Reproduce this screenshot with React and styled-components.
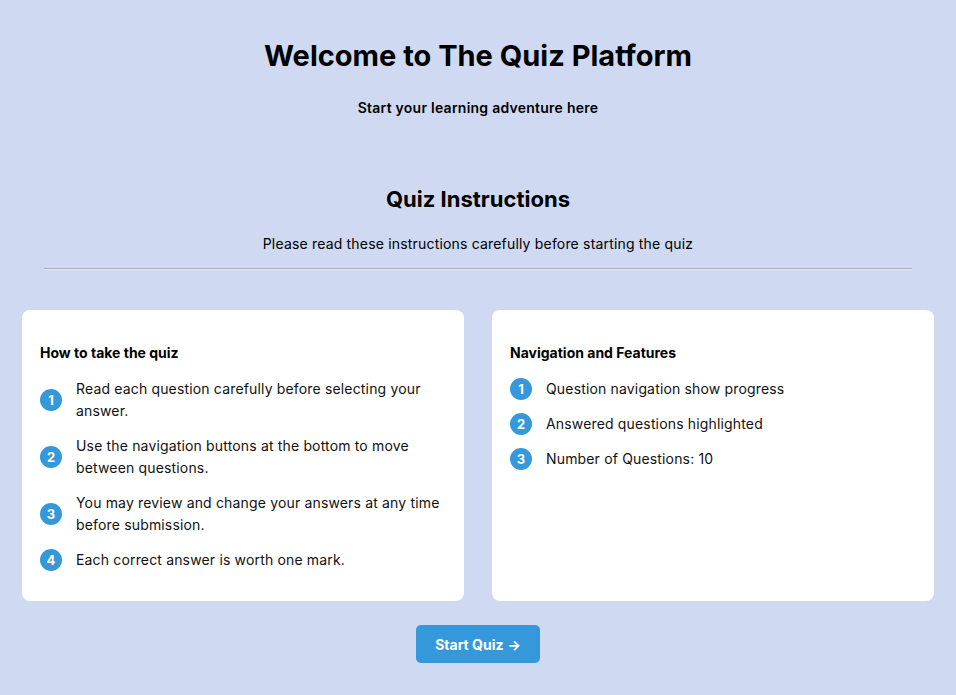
import React from "react";
import styled, { createGlobalStyle } from "styled-components";

const Global = createGlobalStyle`
  html, body { margin: 0; padding: 0; background: #cfd9f1; }
  body { font-family: Inter, "Noto Sans", sans-serif; color: #000; }
  * { box-sizing: border-box; }
`;

const Page = styled.div`
  min-height: 695px;
  background: #cfd9f1;
  padding: 38px 22px 32px;
  display: flex;
  flex-direction: column;
  align-items: stretch;
`;

const Title = styled.h1`
  margin: 0;
  font-size: 29px;
  line-height: 36px;
  font-weight: 700;
  text-align: center;
`;

const Subtitle = styled.p`
  margin: 24px 0 0;
  font-size: 14px;
  line-height: 20px;
  font-weight: 600;
  letter-spacing: 0.25px;
  text-align: center;
`;

const SectionTitle = styled.h2`
  margin: 67px 0 0;
  font-size: 22px;
  line-height: 28px;
  font-weight: 700;
  text-align: center;
`;

const Lead = styled.p`
  margin: 21px 0 0;
  font-size: 14px;
  line-height: 20px;
  letter-spacing: 0.18px;
  text-align: center;
`;

const Divider = styled.hr`
  margin: 14px 22px 0;
  border: 0;
  border-top: 1px solid #a9abb1;
  border-bottom: 1px solid #e6eaf4;
  height: 0;
`;

const Cards = styled.div`
  margin-top: 40px;
  display: grid;
  grid-template-columns: 1fr 1fr;
  gap: 28px;
`;

const Card = styled.section`
  background: #fff;
  border-radius: 8px;
  padding: 34px 18px 30px;
`;

const CardTitle = styled.h3`
  margin: 0;
  font-size: 14px;
  line-height: 17px;
  font-weight: 700;
`;

const List = styled.ol`
  list-style: none;
  margin: 17px 0 0;
  padding: 0;
  display: flex;
  flex-direction: column;
  gap: 13px;
`;

const Item = styled.li`
  display: flex;
  align-items: center;
  gap: 14px;
  font-size: 14px;
  line-height: 22px;
  letter-spacing: 0.16px;
  color: #111;
`;

const Badge = styled.span`
  flex: 0 0 22px;
  width: 22px;
  height: 22px;
  border-radius: 50%;
  background: #3498db;
  color: #fff;
  font-size: 13px;
  font-weight: 700;
  letter-spacing: 0;
  display: flex;
  align-items: center;
  justify-content: center;
  line-height: 1;
`;

const ItemText = styled.span`
  flex: 1;
`;

const Actions = styled.div`
  margin-top: 24px;
  display: flex;
  justify-content: center;
`;

const StartButton = styled.button`
  width: 124px;
  height: 38px;
  border: 0;
  border-radius: 5px;
  background: #3498db;
  color: #fff;
  font-family: Inter, "Noto Sans", sans-serif;
  font-size: 14px;
  font-weight: 700;
  cursor: pointer;
  display: flex;
  align-items: center;
  justify-content: center;
  gap: 4px;
`;

const howTo = [
  "Read each question carefully before selecting your answer.",
  "Use the navigation buttons at the bottom to move between questions.",
  "You may review and change your answers at any time before submission.",
  "Each correct answer is worth one mark.",
];

const features = [
  "Question navigation show progress",
  "Answered questions highlighted",
  "Number of Questions: 10",
];

function InstructionCard({ title, items }) {
  return (
    <Card>
      <CardTitle>{title}</CardTitle>
      <List>
        {items.map((t, i) => (
          <Item key={i}>
            <Badge>{i + 1}</Badge>
            <ItemText>{t}</ItemText>
          </Item>
        ))}
      </List>
    </Card>
  );
}

export default function App() {
  return (
    <>
      <Global />
      <Page>
        <Title>Welcome to The Quiz Platform</Title>
        <Subtitle>Start your learning adventure here</Subtitle>
        <SectionTitle>Quiz Instructions</SectionTitle>
        <Lead>Please read these instructions carefully before starting the quiz</Lead>
        <Divider />
        <Cards>
          <InstructionCard title="How to take the quiz" items={howTo} />
          <InstructionCard title="Navigation and Features" items={features} />
        </Cards>
        <Actions>
          <StartButton>
            Start Quiz <span>→</span>
          </StartButton>
        </Actions>
      </Page>
    </>
  );
}
